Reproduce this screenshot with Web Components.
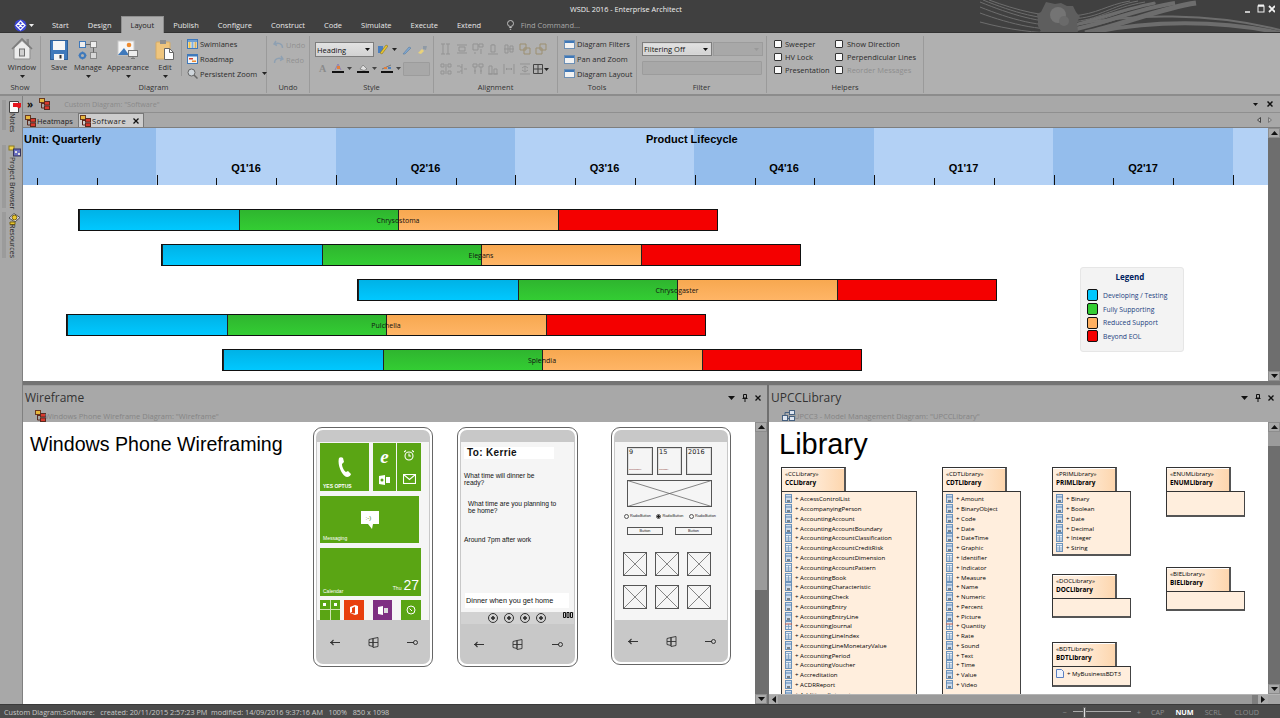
<!DOCTYPE html>
<html lang="en"><head><meta charset="utf-8"><title>WSDL 2016 - Enterprise Architect</title>
<style>html,body{margin:0;padding:0;background:#404040;overflow:hidden}</style></head>
<body>
<ea-app>
  <ea-titlebar slot="top"></ea-titlebar>
  <ea-ribbon slot="top">
    <ea-group label="Show" style="width:41px"><ea-big icon="window" label="Window" arrow style="width:38px;margin-left:3px"></ea-big></ea-group>
    <ea-group label="Diagram" style="width:226px">
      <ea-big icon="save" label="Save" style="width:26px;margin-left:5px"></ea-big>
      <ea-big icon="manage" label="Manage" arrow style="width:28px;margin-left:2px"></ea-big>
      <ea-big icon="appearance" label="Appearance" arrow style="width:44px;margin-left:4px"></ea-big>
      <ea-big icon="edit" label="Edit" arrow style="width:24px;margin-left:3px"></ea-big>
      <ea-vsep style="margin:4px 5px 0 4px"></ea-vsep>
      <ea-stack>
        <ea-small icon="swim">Swimlanes</ea-small>
        <ea-small icon="road">Roadmap</ea-small>
        <ea-small icon="zoom" arrow>Persistent Zoom</ea-small>
      </ea-stack>
    </ea-group>
    <ea-group label="Undo" style="width:43px"><ea-stack style="margin-left:6px">
        <ea-small icon="undo" disabled>Undo</ea-small>
        <ea-small icon="redo" disabled>Redo</ea-small></ea-stack></ea-group>
    <ea-group label="Style" style="width:124px"><ea-style-tools></ea-style-tools></ea-group>
    <ea-group label="Alignment" style="width:124px"><ea-align-tools></ea-align-tools></ea-group>
    <ea-group label="Tools" style="width:79px"><ea-stack style="margin-left:6px">
        <ea-small icon="win">Diagram Filters</ea-small>
        <ea-small icon="win">Pan and Zoom</ea-small>
        <ea-small icon="win">Diagram Layout</ea-small></ea-stack></ea-group>
    <ea-group label="Filter" style="width:130px"><ea-filter-tools></ea-filter-tools></ea-group>
    <ea-group label="Helpers" style="width:157px"><ea-helpers></ea-helpers></ea-group>
  </ea-ribbon>

  <ea-rail slot="rail">
    <ea-rail-item icon="notes" style="height:30px;margin-top:4px">Notes</ea-rail-item>
    <ea-rail-item icon="browser" style="height:63px;margin-top:15px">Project Browser</ea-rail-item>
    <ea-rail-item icon="resources" style="height:46px;margin-top:4px">Resources</ea-rail-item>
  </ea-rail>

  <ea-doc slot="doc">
    <ea-roadmap></ea-roadmap>
    <ea-vscroll slot="scroll"></ea-vscroll>
  </ea-doc>

  <ea-pane slot="left" heading="Wireframe" sub="Windows Phone Wireframe Diagram: &quot;Wireframe&quot;" icon="dia" style="width:744px">
    <ea-wire>
      <ea-phone style="left:290px;top:5px" screen="178"><ea-start-screen></ea-start-screen></ea-phone>
      <ea-phone style="left:434px;top:5px;width:121px" screen="182" cut><ea-sms-screen></ea-sms-screen></ea-phone>
      <ea-phone style="left:588px;top:5px;height:238px" screen="178"><ea-form-screen></ea-form-screen></ea-phone>
    </ea-wire>
    <ea-vscroll thumb="158" style="background:#6e6e6e"></ea-vscroll>
  </ea-pane>

  <ea-pane slot="right" heading="UPCCLibrary" sub="UPCC3 - Model Management Diagram: &quot;UPCCLibrary&quot;" icon="net" sub-x="13" style="flex:1">
    <ea-library>
      <ea-package stereo="CCLibrary" name="CCLibrary" style="left:12px;top:45px;width:136px" bodyh="210" types="AAAABBABBAAAARBABBAAA" items="AccessControlList,AccompanyingPerson,AccountingAccount,AccountingAccountBoundary,AccountingAccountClassification,AccountingAccountCreditRisk,AccountingAccountDimension,AccountingAccountPattern,AccountingBook,AccountingCharacteristic,AccountingCheck,AccountingEntry,AccountingEntryLine,AccountingJournal,AccountingLineIndex,AccountingLineMonetaryValue,AccountingPeriod,AccountingVoucher,Accreditation,ACDRReport,AdditionalInterest"></ea-package>
      <ea-package stereo="CDTLibrary" name="CDTLibrary" style="left:173px;top:45px;width:79px" bodyh="210" types="AAAAAABBBAAAARBABBAA" items="Amount,BinaryObject,Code,Date,DateTime,Graphic,Identifier,Indicator,Measure,Name,Numeric,Percent,Picture,Quantity,Rate,Sound,Text,Time,Value,Video"></ea-package>
      <ea-package stereo="PRIMLibrary" name="PRIMLibrary" style="left:283px;top:45px;width:79px" bodyh="65" types="AAAABB" items="Binary,Boolean,Date,Decimal,Integer,String"></ea-package>
      <ea-package stereo="ENUMLibrary" name="ENUMLibrary" style="left:397px;top:45px;width:79px" bodyh="26"></ea-package>
      <ea-package stereo="DOCLibrary" name="DOCLibrary" style="left:283px;top:152px;width:79px" bodyh="20"></ea-package>
      <ea-package stereo="BIELibrary" name="BIELibrary" style="left:397px;top:145px;width:79px" bodyh="20"></ea-package>
      <ea-package stereo="BDTLibrary" name="BDTLibrary" style="left:283px;top:220px;width:79px" bodyh="21" types="D" items="MyBusinessBDT3"></ea-package>
    </ea-library>
    <ea-vscroll thumb="14"></ea-vscroll>
    <ea-hscroll slot="bottom"></ea-hscroll>
  </ea-pane>

  <ea-status slot="status"></ea-status>
</ea-app>

<script>
const F='"Open Sans","Noto Sans","Liberation Sans",sans-serif';
const A='"Liberation Sans",Arial,sans-serif';
const g='#939393';
const win=(c='#3f78b8')=>`<rect x=".5" y=".5" width="10" height="8" fill="#f2f2f2" stroke="#6d8fb4"/><rect x="1" y="1" width="9" height="2" fill="${c}"/>`;
const ICONS={
 window:[22,24,`<path d="M15.5 3h2.5v6l-2.5-2z" fill="#8b8b8b"/><path d="M3 12 11 4.500 19 12v11H3z" fill="#ececec" stroke="#8d8d8d"/><path d="M1 13 11 3l10 10" fill="none" stroke="#7d7d7d" stroke-width="1.600"/><rect x="8.500" y="13" width="5" height="7" fill="#cfcfcf" stroke="#6f6f6f"/>`],
 save:[18,20,`<rect x=".5" y=".5" width="17" height="19" fill="#3f79bb" stroke="#2f6098"/><rect x="3" y="1" width="12" height="9" fill="#f6f6f6"/><rect x="4" y="14" width="10" height="6" fill="#f4f4f4"/><rect x="9.500" y="15" width="2" height="3.500" fill="#333"/>`],
 manage:[20,20,`<rect x="1.500" y="1.500" width="6" height="6" fill="#eee" stroke="#3f79bb"/><rect x="12.500" y="1.500" width="6" height="6" fill="#eee" stroke="#888"/><path d="M7.500 4.500h5" stroke="#666"/><rect x="12.500" y="12.500" width="6" height="6" fill="#d8d8d8" stroke="#888"/><path d="M15.500 7.500v5" stroke="#666"/><circle cx="4.500" cy="15.500" r="2.600" fill="none" stroke="#3f79bb" stroke-width="2"/><path d="M4.500 11.500v1.500M4.500 18v1.500M.5 15.500H2M7 15.500h1.500" stroke="#3f79bb" stroke-width="1.400"/>`],
 appearance:[22,20,`<rect x="1" y="1" width="16" height="14" fill="#f6f6f6" stroke="#c9c9c9"/><circle cx="12" cy="5" r="2.300" fill="#ee8a2f"/><path d="M1 15 7 8l5 7z" fill="#3f79bb"/><rect x="11.500" y="10.500" width="9" height="6" fill="#ededed" stroke="#777"/><path d="M14 18.500h4M16 16.500v2" stroke="#777"/>`],
 edit:[20,21,`<rect x="1" y="3" width="14" height="17" rx="1" fill="#efc57d" stroke="#d5ab66"/><rect x="5" y="1" width="6" height="4" fill="#8f8f8f"/><path d="M9.500 9.500h5l4 4v7h-9z" fill="#fdfdfd" stroke="#666"/><path d="M14.500 9.500v4h4" fill="none" stroke="#666"/>`],
 swim:[11,10,`<rect x=".5" y=".5" width="10" height="9" fill="#eee" stroke="#3f79bb"/><rect x="1" y="1" width="9" height="2" fill="#6f9fd3"/><rect x="1.500" y="3" width="2" height="6" fill="#f0c040"/><rect x="4.500" y="3" width="2" height="6" fill="#7fb0dd"/><rect x="7.500" y="3" width="2" height="6" fill="#d9b25c"/>`],
 road:[11,10,`<rect x=".5" y=".5" width="10" height="9" fill="#f4f4f4" stroke="#3f79bb"/><rect x="1" y="1" width="9" height="1.500" fill="#3f79bb"/><rect x="2" y="4" width="4" height="1.500" fill="#d8412f"/><rect x="5" y="6.500" width="4" height="1.500" fill="#ee8a2f"/>`],
 zoom:[11,11,`<circle cx="4.500" cy="4.500" r="3.500" fill="#cfd6dc" stroke="#666"/><path d="m7 7 3.500 3.500" stroke="#666" stroke-width="1.500"/>`],
 undo:[11,10,`<path d="M3 1 1 4l3 1.500M1.500 4C5 2.500 9.500 3 9.500 8" fill="none" stroke="#8ea0b2" stroke-width="1.400"/>`],
 redo:[11,10,`<path d="M8 1l2 3-3 1.500M9.500 4C6 2.500 1.500 3 1.500 8" fill="none" stroke="#8ea0b2" stroke-width="1.400"/>`],
 win:[11,9,win()],
 dia:[11,12,`<rect x=".5" y=".5" width="5" height="4" fill="#e6b73c" stroke="#6a3a20"/><rect x="5.500" y="3.500" width="5" height="3.500" fill="#d8382c" stroke="#5a2a20"/><rect x="5.500" y="8" width="5" height="3.500" fill="#d8382c" stroke="#5a2a20"/><path d="M2.500 4.500v5.500h3M2.500 5.500h3" fill="none" stroke="#5a2a20"/>`],
 net:[13,12,`<rect x=".5" y="5.500" width="5" height="5" fill="#dfe6f0" stroke="#45607f"/><rect x="7.500" y=".5" width="5" height="4" fill="#dfe6f0" stroke="#45607f"/><rect x="7.500" y="6.500" width="5" height="4" fill="#dfe6f0" stroke="#45607f"/><path d="M3 5.500V2.500h4.500M5.500 8.500h2" fill="none" stroke="#45607f"/>`],
 notes:[13,14,`<path d="M1.500 1.500h9v11h-9z" fill="#fafafa" stroke="#444"/><path d="M5 3h8v4l-2 1.500L9 7H5z" fill="#e4141c"/>`],
 browser:[13,13,`<rect x="1" y="1" width="5" height="4" fill="#f1d34d" stroke="#8a7a20"/><rect x="5.500" y="4" width="7" height="7" fill="#6b6fc0" stroke="#33355f"/><rect x="7" y="6" width="2" height="2" fill="#ddd"/><rect x="10" y="8" width="2" height="2" fill="#ddd"/>`],
 resources:[14,13,`<path d="M1 6 6 1.500l6 4L7 10z" fill="#d9d9ee" stroke="#555"/><circle cx="6.500" cy="5.500" r="2.400" fill="#e9c62f" stroke="#7a6510"/><path d="M2 10h5v2.500H2z" fill="#e9c62f" stroke="#7a6510"/>`]
};
const ic=(n,x='')=>{const [w,h,s]=ICONS[n];return `<svg width="${w}" height="${h}" viewBox="0 0 ${w} ${h}" style="display:block;flex:none;${x}">${s}</svg>`};
const caret=(c='#222')=>`<svg width="5" height="3" viewBox="0 0 5 3" style="display:block"><path d="M0 0h5L2.500 3z" fill="${c}"/></svg>`;

function def(tag,css,render){
  customElements.define(tag,class extends HTMLElement{
    connectedCallback(){ if(this.shadowRoot) return;
      const r=this.attachShadow({mode:'open'});
      r.innerHTML=`<style>${css}</style>`+(typeof render==='function'?render(this):render);
    }
  });
}

def('ea-app',`:host{display:flex;flex-direction:column;width:1280px;height:718px;overflow:hidden;background:#a8a8a8;font-family:${F}}
 .main{flex:1;display:flex;min-height:0}
 .col{flex:1;display:flex;flex-direction:column;min-width:0}
 .split{flex:1;display:flex;gap:2px;min-height:0;background:#6f6f6f}`,
 `<slot name="top"></slot><div class="main"><slot name="rail"></slot><div class="col"><slot name="doc"></slot><div class="split"><slot name="left"></slot><slot name="right"></slot></div></div></div><slot name="status"></slot>`);

def('ea-titlebar',`:host{display:block;height:33px;position:relative;background:#404040;color:#eee;box-sizing:border-box;overflow:hidden}
 .art{position:absolute;left:980px;top:0}
 .t{position:relative;height:17px;display:flex;align-items:center;font-size:7.300px;padding-left:570px;color:#f0f0f0}
 .ctl{margin-left:auto;display:flex;align-items:center;margin-right:5px}
 .tabs{position:relative;display:flex;height:16px;align-items:stretch;font-size:7.500px;color:#e8e8e8;box-shadow:inset 0 -1px #333}
 .logo{width:42.500px;display:flex;align-items:center;padding-left:14px;box-sizing:border-box;gap:2px}
 .tab{padding:0 9.500px;display:flex;align-items:center;padding-bottom:1px}
 .on{background:#b0b0b0;color:#222;border:1px solid #8f8f8f;border-bottom:0;padding:0 8.500px 1px;margin-top:-1px}
 .find{display:flex;align-items:center;margin-left:16px;gap:7px;color:#a8a8a8;padding-bottom:1px}`,
 `<svg class="art" width="300" height="33" viewBox="0 0 300 33" fill="none" stroke="#6d6d6d">
   <g stroke-width="1"><path d="M0 2C30 14 60 24 90 22S130 8 165 2"/><path d="M3 0C33 12 62 21 92 19S130 6 158 1"/><path d="M9 0C36 10 66 18 92 16S126 5 150 1"/><path d="M0 7C30 19 60 28 92 25S140 10 176 3"/><path d="M0 13C30 24 65 33 100 28S150 12 190 3"/></g>
   <path d="M60 33C95 28 130 12 175 3" stroke-width="3"/><path d="M75 33C115 28 150 10 195 3" stroke-width="4"/><path d="M105 33C140 26 180 8 216 3" stroke-width="5"/>
   <path d="M100 24C150 14 230 12 300 30" stroke-width="2"/><path d="M110 33C170 20 240 20 300 33" stroke-width="4"/><path d="M0 22C30 30 55 33 80 33" stroke-width="1"/>
   <g stroke="none"><path d="M66 2l9 2 6-1 6 3 6 0 3 6 4 5-3 5 1 11H62l-4-7 0-6-1-6 4-2z" fill="#5e5e5e"/><circle cx="78" cy="15" r="8" fill="#747474"/><circle cx="84" cy="21" r="5" fill="#6a6a6a"/></g>
  </svg>
  <div class="t">WSDL 2016 - Enterprise Architect<span class="ctl">
    <svg width="30" height="9" viewBox="0 0 30 9" fill="none" stroke="#f2f2f2"><path d="M0 8h5" stroke-width="1.500"/><rect x="13" y="2" width="6" height="6" stroke-width="1"/><path d="M13 1.500h6" stroke-width="2"/><path d="M24 2l6 6m0-6-6 6" stroke-width="1.800"/></svg></span></div>
  <div class="tabs">
   <div class="logo"><svg width="13" height="13" viewBox="0 0 13 13"><circle cx="6.500" cy="6.500" r="6" fill="#3b44d6"/><path d="M6.500 2 11 6.500 6.500 11 2 6.500zM4.200 4.200l4.600 4.600M8.800 4.200 4.200 8.800" fill="none" stroke="#fff" stroke-width="1.100"/></svg>${caret('#eee')}</div>
   <div class="tab">Start</div><div class="tab">Design</div><div class="tab on">Layout</div><div class="tab">Publish</div><div class="tab">Configure</div><div class="tab">Construct</div><div class="tab">Code</div><div class="tab">Simulate</div><div class="tab">Execute</div><div class="tab">Extend</div>
   <div class="find"><svg width="7" height="10" viewBox="0 0 7 10" fill="none" stroke="#c0c0c0"><circle cx="3.500" cy="3.500" r="3"/><path d="M2.300 7.500h2.400M2.800 9.300h1.400"/></svg>Find Command...</div>
  </div>`);

def('ea-ribbon',`:host{display:flex;height:63px;box-sizing:border-box;padding-top:3px;background:#b0b0b0;border-bottom:2px solid #8c8c8c;color:#2b2b2b;font-size:7.500px}`,`<slot></slot>`);
def('ea-group',`:host{display:flex;flex-direction:column;box-sizing:border-box;height:57px;border-right:1px solid #9a9a9a;flex:none}
 .c{flex:1;display:flex;min-height:0}
 .l{height:12px;line-height:12px;text-align:center;color:#333}`,
 e=>`<div class="c"><slot></slot></div><div class="l">${e.getAttribute('label')}</div>`);
def('ea-big',`:host{display:flex;flex-direction:column;align-items:center;flex:none;white-space:nowrap}
 .i{height:21px;margin-top:3px;display:flex;align-items:flex-end}
 .l{line-height:10px;margin-top:2px}
 .a{margin-top:3px}`,
 e=>`<div class="i">${ic(e.getAttribute('icon'))}</div><div class="l">${e.getAttribute('label')}</div>${e.hasAttribute('arrow')?`<div class="a">${caret()}</div>`:''}`);
def('ea-vsep',`:host{display:block;width:1px;height:36px;background:#989898;flex:none}`,'');
def('ea-stack',`:host{display:flex;flex-direction:column;padding-top:1px;flex:none}`,'<slot></slot>');
def('ea-small',`:host{display:flex;align-items:center;height:15px;gap:2px;white-space:nowrap}
 :host([disabled]){color:#919191}
 .a{margin-left:3px}`,
 e=>`${ic(e.getAttribute('icon'))}<slot></slot>${e.hasAttribute('arrow')?`<span class="a">${caret()}</span>`:''}`);
def('ea-combo',`:host{display:flex;align-items:center;box-sizing:border-box;height:15px;background:linear-gradient(#e2e2e2,#d2d2d2);border:1px solid #7d7d7d;padding:0 3px 0 1px;color:#111;font-size:7.500px;flex:none}
 :host([disabled]){background:#a8a8a8;border-color:#9c9c9c}
 .s{flex:1}`,
 e=>`<span class="s"><slot></slot></span>${caret(e.hasAttribute('disabled')?'#999':'#111')}`);
def('ea-field',`:host{display:block;box-sizing:border-box;background:#a8a8a8;border:1px solid #9c9c9c;border-radius:1px;flex:none}`,'');

def('ea-style-tools',`:host{display:flex;flex-direction:column;padding:6px 0 0 5px;gap:5px}
 .r{display:flex;align-items:center;height:15px}`,
 `<div class="r"><ea-combo style="width:59px">Heading</ea-combo>
   <svg style="margin-left:3px" width="11" height="11" viewBox="0 0 11 11"><path d="M1 2h5v7H1z" fill="#4a7fc0"/><path d="M3 9 9 1l2 1-6 8z" fill="#e9c62f" stroke="#7a6510" stroke-width=".5"/></svg>
   <span style="margin-left:4px">${caret()}</span>
   <svg style="margin-left:5px" width="10" height="11" viewBox="0 0 10 11"><path d="M1 10 7 3l2 1-6 6z" fill="#7fa6cf" stroke="#5a7d9f" stroke-width=".6"/></svg>
   <svg style="margin-left:5px" width="11" height="11" viewBox="0 0 11 11"><path d="M1 9 5 5l2 2-3 3z" fill="#e9d27a"/><path d="M6 2l4 0-1 4-3-1z" fill="#8f9aa5"/></svg></div>
  <div class="r" style="margin-top:-1px">
   <span style="font:bold 10px 'Liberation Serif',serif;color:#8a8a8a;margin-left:4px">A</span>
   <svg style="margin-left:6px" width="12" height="11" viewBox="0 0 12 11"><path d="M3 7 6 1l3 6" fill="none" stroke="#8f7fb0"/><rect x="5" y="3" width="3" height="3" fill="#e27f3c"/><rect y="8" width="12" height="2" fill="#111"/></svg>
   <span style="margin-left:3px">${caret('#444')}</span>
   <svg style="margin-left:5px" width="12" height="11" viewBox="0 0 12 11"><path d="M3 6l3-4 4 4-3 1.500z" fill="#e0e0e0" stroke="#666" stroke-width=".6"/><rect y="8" width="12" height="2" fill="#111"/></svg>
   <span style="margin-left:3px">${caret('#444')}</span>
   <svg style="margin-left:4px" width="12" height="11" viewBox="0 0 12 11"><path d="M1 6l9-4" stroke="#777"/><rect x="3" y="4" width="3" height="2" fill="#e27f3c"/><rect x="7" y="4" width="3" height="2" fill="#4a7fc0"/><rect y="8" width="12" height="2" fill="#111"/></svg>
   <span style="margin-left:3px">${caret('#444')}</span>
   <ea-field style="width:27px;height:14px;margin-left:2px"></ea-field></div>`);

const AL=['M3 1v10M8 1v10M1 1h4M1 11h4M6 1h4M6 11h4','M1 2h10M1 10h10M3 4h6v4H3z','M1 1h5v6H1zM7 1h4v3H7zM3 9v2M9 6v5','M1 11h10M4 2h4v7H4zM6 1v1','M1 6h10M2 2h3v8H2zM7 3h3v6H7z','M1 1h6v6H1zM5 5h6v6H5z','M5 1h6v6H5zM1 5h6v6H1z','M1 1h3v3H1zM1 8h3v3H1zM8 1h3v3H8zM8 8h3v3H8zM6 1v10','M1 3h3M1 9h3M8 6h3M6 1v10M4 4h2M4 8h2','M1 1h4v3H1zM7 1h4v3H7zM3 4v7M9 4v7M2 8h2M8 8h2','M1 11h10M2 3h3v8H2zM7 6h3v5H7z','M1 1v10M11 1v10M3 6h6M3 6l1-1M3 6l1 1M9 6l-1-1M9 6l-1 1','M1 1h10M1 11h10M6 3v6M3 5l3-2 3 2M3 7l3 2 3-2'];
def('ea-align-tools',`:host{display:grid;grid-template-columns:repeat(7,15.830px);grid-auto-rows:16px;row-gap:4px;padding:5px 0 0 4px;justify-items:center;align-items:center;align-content:start}`,
 AL.map((d,i)=>`<svg width="12" height="12" viewBox="0 0 12 12" fill="none" stroke="${i==5||i==6?'#9c8f70':g}"><path d="${d}"/></svg>`).join('')+
 `<span style="display:flex;align-items:center;gap:1px"><svg width="10" height="10" viewBox="0 0 10 10" fill="none" stroke="#444"><path d="M.5.5h9v9h-9zM5 .5v9M.5 5h9"/></svg>${caret()}</span>`);

def('ea-filter-tools',`:host{display:flex;flex-direction:column;padding:6px 0 0 5px;gap:5px}
 .r{display:flex;gap:1px}`,
 `<div class="r"><ea-combo style="width:70px;height:14px;box-shadow:0 0 0 1px #d8d8d8 inset">Filtering Off</ea-combo><ea-combo disabled style="width:50px;height:14px"></ea-combo></div><ea-field style="width:120px;height:14px"></ea-field>`);
def('ea-check',`:host{display:flex;align-items:center;height:13px;gap:3px;white-space:nowrap;color:#2b2b2b}
 :host([disabled]){color:#8e8e8e}
 i{display:block;width:8px;height:8px;box-sizing:border-box;background:#fafafa;border:1px solid #333;border-radius:1px;flex:none}`,`<i></i><slot></slot>`);
def('ea-helpers',`:host{display:grid;grid-template-columns:61px auto;grid-template-rows:repeat(3,13px);padding:1px 0 0 7px;align-content:start;column-gap:0}`,
 `<ea-check>Sweeper</ea-check><ea-check style="gap:4px">Show Direction</ea-check><ea-check>HV Lock</ea-check><ea-check style="gap:4px">Perpendicular Lines</ea-check><ea-check>Presentation</ea-check><ea-check disabled style="gap:4px">Reorder Messages</ea-check>`);

def('ea-rail',`:host{display:flex;flex-direction:column;width:23px;flex:none;box-sizing:border-box;background:#a8a8a8;border-right:1px solid #808080;padding-left:2px}`,'<slot></slot>');
def('ea-rail-item',`:host{display:flex;flex-direction:column;align-items:flex-start;width:20px;background:linear-gradient(#9b9b9b,#9b9b9b) 0 0/4px 100% no-repeat;color:#262626;font-size:7.100px;white-space:nowrap}
 .i{margin-left:6px}
 .t{writing-mode:vertical-rl;line-height:8px;margin-left:7px;margin-top:-1px}`,
 e=>`<div class="i">${ic(e.getAttribute('icon'))}</div><div class="t"><slot></slot></div>`);

def('ea-doc',`:host{display:flex;flex-direction:column;height:289px;flex:none;background:#a8a8a8;color:#333;font-size:7.500px}
 .bar{height:17px;flex:none;box-sizing:border-box;display:flex;align-items:center;border-bottom:1px solid #8f8f8f;padding:0 7px 0 4px}
 .sub{margin-left:14px;color:#8a8a8a;font-size:7.200px}
 .ri{margin-left:auto;display:flex;align-items:center;gap:9px}
 .tabs{height:15px;flex:none;display:flex;align-items:flex-end;box-sizing:border-box;padding-left:1px;background:#a8a8a8;position:relative;border-bottom:1px solid #7e7e7e}
 .tab{display:flex;align-items:center;height:13px;gap:1px;padding:0 1px;color:#222;box-sizing:border-box;width:54px}
 .on{background:#cdcdcd;height:14px;border:1px solid #777;border-bottom:0;width:66px;letter-spacing:.05em;padding-left:1px}
 .x{margin-left:auto;margin-right:3px}
 .nav{margin-left:auto;display:flex;gap:7px;align-self:center;padding-right:8px}
 .body{flex:1;display:flex;min-height:0}
 .foot{height:4px;flex:none;background:#747474}`,
 `<div class="bar"><b style="font-size:10px;line-height:1;color:#111;margin-right:6px">»</b>${ic('dia')}<span class="sub">Custom Diagram: "Software"</span><span class="ri">${caret('#111')}<svg width="6" height="6" viewBox="0 0 6 6" stroke="#111" stroke-width="1.500"><path d="M.5.5l5 5m0-5-5 5"/></svg></span></div>
  <div class="tabs"><div class="tab">${ic('dia')}Heatmaps</div><div class="tab on">${ic('dia')}Software<svg class="x" width="6" height="6" viewBox="0 0 6 6" stroke="#111" stroke-width="1.300"><path d="M.5.5l5 5m0-5-5 5"/></svg></div>
   <span class="nav"><svg width="4" height="6" viewBox="0 0 4 6" fill="#bbb" stroke="#444"><path d="M3.500.5v5L.5 3z"/></svg><svg width="4" height="6" viewBox="0 0 4 6" fill="#bbb" stroke="#777"><path d="M.5.500v5l3-2.500z"/></svg></span></div>
  <div class="body"><slot></slot><slot name="scroll"></slot></div><div class="foot"></div>`);

def('ea-vscroll',`:host{display:flex;flex-direction:column;width:12px;flex:none;background:#6e6e6e}
 .b{height:10px;flex:none;background:#a9a9a9;border:1px solid #8d8d8d;box-sizing:border-box;display:flex;align-items:center;justify-content:center}
 .t{flex:1;min-height:0}
 .h{background:#9b9b9b}`,
 e=>`<div class="b"><svg width="7" height="4" viewBox="0 0 7 4"><path d="M0 4h7L3.500 0z" fill="#111"/></svg></div><div class="h" style="height:${e.getAttribute('thumb')||0}px"></div><div class="t"></div><div class="b"><svg width="7" height="4" viewBox="0 0 7 4"><path d="M0 0h7L3.500 4z" fill="#111"/></svg></div>`);
def('ea-hscroll',`:host{display:flex;height:10px;flex:none;background:#9a9a9a;border-top:1px solid #b4b4b4;box-sizing:border-box;align-items:center}
 .e{width:9px;display:flex;justify-content:center;background:#aaa;height:100%;align-items:center;flex:none}
 .t{flex:1}
 .r{background:#7e7e7e;width:6px;height:100%}
 .c{width:12px;height:100%;background:#a4a4a4}`,
 `<div class="e"><svg width="4" height="7" viewBox="0 0 4 7"><path d="M4 0v7L0 3.500z" fill="#111"/></svg></div><div class="t"></div><div class="r"></div><div class="e" style="width:10px"><svg width="4" height="7" viewBox="0 0 4 7"><path d="M0 0v7L4 3.500z" fill="#111"/></svg></div><div class="c"></div>`);

def('ea-pane',`:host{display:flex;flex-direction:column;min-width:0;background:#a8a8a8;flex:none}
 .h{height:37px;flex:none;box-sizing:border-box;border-top:1px solid #9c9c9c;position:relative;color:#333}
 .t{font-size:12px;line-height:23px;padding-left:2px;height:24px}
 .s{display:flex;align-items:center;height:12px;font-size:7.500px;color:#858585;padding-left:var(--sx,12px)}
 .s svg{margin-right:-1px}
 .ri{position:absolute;right:6px;top:8px;display:flex;align-items:center;gap:7px}
 .b{flex:1;display:flex;min-height:0}`,
 e=>{const sx=e.getAttribute('sub-x')||'12';return `<div class="h"><div class="t">${e.getAttribute('heading')}</div><div class="s" style="--sx:${sx}px">${ic(e.getAttribute('icon'))}${e.getAttribute('sub').replace(/"/g,'&quot;')}</div>
  <span class="ri"><svg width="7" height="4" viewBox="0 0 7 4"><path d="M0 0h7L3.500 4z" fill="#111"/></svg><svg width="6" height="8" viewBox="0 0 6 8" fill="none" stroke="#111"><path d="M1.500.5h3v3.500h-3zM.5 4.500h5M3 4.500V8"/></svg><svg width="6" height="6" viewBox="0 0 6 6" stroke="#111" stroke-width="1.300"><path d="M.5.500l5 5m0-5-5 5"/></svg></span></div>
  <div class="b"><slot></slot></div><slot name="bottom"></slot>`});

/* ---------- roadmap diagram ---------- */
def('ea-bar',`:host{position:absolute;display:flex;height:22px;box-sizing:border-box;border:1px solid #111;width:640px;font:7px ${F};color:#111}
 i{display:block;flex:1;box-sizing:border-box;border-left:1px solid #222}
 i:first-child{border-left:0}
 .a{background:linear-gradient(#00b2e6,#00c8ff)}.b{background:linear-gradient(#2fb52f,#33cd33)}.c{background:linear-gradient(#f7a850,#ffb566)}.d{background:#f40000}
 span{position:absolute;left:0;right:0;top:0;height:100%;display:flex;align-items:center;justify-content:center}`,
 e=>`<i class="a"></i><i class="b"></i><i class="c"></i><i class="d"></i><span>${e.getAttribute('label')}</span>`);
def('ea-legend',`:host{position:absolute;display:block;box-sizing:border-box;width:104px;height:85px;background:#f3f3f3;border:1px solid #e6e6e6;border-radius:3px;font:6.800px ${F};color:#1d3f80;padding-left:6px}
 h4{margin:4px 0 6.500px;padding-right:10px;text-align:center;font:bold 8px ${F};color:#00215e;line-height:10px}
 .r{display:flex;align-items:center;gap:5px;height:13.700px}
 i{display:block;width:11px;height:12px;box-sizing:border-box;border:1px solid #111;border-radius:2px}`,
 `<h4>Legend</h4><div class="r"><i style="background:#00c8ff"></i>Developing / Testing</div><div class="r"><i style="background:#33cd33"></i>Fully Supporting</div><div class="r"><i style="background:#ffb061"></i>Reduced Support</div><div class="r"><i style="background:#f40000"></i>Beyond EOL</div>`);
def('ea-roadmap',`:host{display:block;flex:1;position:relative;background:#fff;overflow:hidden;min-width:0}
 .hd{display:flex;height:57px;position:relative;font:bold 11px ${A};color:#000}
 .c{display:flex;align-items:flex-end;justify-content:center;padding-bottom:10px;box-sizing:border-box;flex:none;line-height:14px}
 .d{background:#94bdec}.l{background:#b3d1f5}
 .u{position:absolute;left:1px;top:5px}.p{position:absolute;left:623px;top:5px}
 .tk{position:absolute;bottom:0;width:1px;height:7px;background:#111}
 .mj{height:10px}`,
 ()=>{const w=[133,180,179,179,180,179,180,35],q=['',"Q1'16","Q2'16","Q3'16","Q4'16","Q1'17","Q2'17",''];
  let t='';for(let k=0;k<21;k++){const x=Math.round(14+59.8*k);t+=`<i class="tk${(k-2)%3==0?' mj':''}" style="left:${x}px"></i>`}
  const rows=[['Chrysostoma',55,81],['Elegans',138,116],['Chrysogaster',334,151],['Pulchella',43,186],['Splendia',199,221]];
  return `<div class="hd">${w.map((x,i)=>`<div class="c ${i%2?'l':'d'}" style="width:${x}px">${q[i]}</div>`).join('')}<span class="u">Unit: Quarterly</span><span class="p">Product Lifecycle</span>${t}</div>`+
  rows.map(r=>`<ea-bar label="${r[0]}" style="left:${r[1]}px;top:${r[2]}px"></ea-bar>`).join('')+`<ea-legend style="left:1057px;top:139px"></ea-legend>`});

/* ---------- wireframes ---------- */
def('ea-wire',`:host{display:block;flex:1;position:relative;background:#fff;overflow:hidden;min-width:0}
 h1{margin:0;position:absolute;left:7px;top:10px;font:400 19.600px/24px ${A};color:#000}`,
 `<h1>Windows Phone Wireframing</h1><slot></slot>`);
const navIcons=`<svg width="11" height="7" viewBox="0 0 11 7" fill="none" stroke="#333"><path d="M1 3.500h10M4.500 1 2 3.500 4.500 6" stroke-width="1.100"/></svg><svg width="11" height="11" viewBox="0 0 11 11" fill="none" stroke="#333" stroke-width=".9"><path d="M1 2.500 5 1.500v8l-4-1zM5 1.500 10 .5v9l-5 1zM1 5.500h9"/></svg><svg width="11" height="7" viewBox="0 0 11 7" fill="none" stroke="#333"><path d="M0 3.500h7" stroke-width="1.100"/><circle cx="8.500" cy="3.500" r="2"/></svg>`;
def('ea-phone',`:host{position:absolute;display:block;box-sizing:border-box;width:120px;height:240px;border:1px solid #666;border-radius:9px;padding:2px;background:#fff;font-family:${A}}
 .i{height:100%;display:flex;flex-direction:column;background:#c8c8c8;border-radius:7px;overflow:hidden}
 .top{height:12px;flex:none}
 .s{background:#f5f5f5;margin:0 1px;flex:none;overflow:hidden;position:relative}
 .n{flex:1;display:flex;align-items:center;justify-content:space-between;padding:0 12.500px}`,
 e=>`<div class="i"><div class="top"></div><div class="s" style="height:${e.getAttribute('screen')}px"><slot></slot></div><div class="n">${navIcons}</div></div>`);

const Wi={
 phone:`<svg width="14" height="20" viewBox="0 0 14 20"><path d="M1 1c1-1 3-1 4 0l1 4-2 2c0 3 2 7 4 8l2-1 3 3c0 1-2 3-4 3C4 19-1 8 1 1z" fill="#fff"/></svg>`,
 ie:`<span style="font:italic bold 19px 'Liberation Serif',serif;color:#fff;line-height:15px;height:15px">e</span>`,
 ol:`<svg width="11" height="10" viewBox="0 0 11 10"><path d="M0 1 6 0v10l-6-1z" fill="#fff"/><rect x="7" y="2" width="4" height="6" fill="#fff"/><circle cx="3" cy="5" r="1.500" fill="#5aa514"/></svg>`,
 clock:`<svg width="10" height="11" viewBox="0 0 10 11" fill="none" stroke="#fff" stroke-width="1.100"><circle cx="5" cy="6" r="4"/><path d="M5 3.500V6h2M0 2l2-1.500M10 2 8 .5"/></svg>`,
 mail:`<svg width="13" height="10" viewBox="0 0 13 10" fill="none" stroke="#fff" stroke-width="1.100"><rect x=".5" y=".5" width="12" height="9"/><path d="m.5.500 6 5 6-5"/></svg>`,
 msg:`<svg width="18" height="18" viewBox="0 0 18 18"><path d="M0 0h18v13h-6l-1 5-4-5H0z" fill="#fff"/></svg>`
};
def('ea-start-screen',`:host{display:flex;flex-direction:column;padding:1px 0 0 3px;color:#fff;font-size:5px}
 .r{display:flex}
 .t{background:#5aa514;position:relative;display:flex;align-items:center;justify-content:center;flex:none}
 .l{position:absolute;left:3px;bottom:2px;line-height:6px;white-space:nowrap}
 .col{display:flex;flex-direction:column;justify-content:space-around;align-items:center}`,
 `<div class="r" style="height:48px">
   <div class="t" style="width:49px">${Wi.phone}<span class="l" style="font-weight:bold">YES OPTUS</span></div>
   <div class="t col" style="width:23px;margin-left:4px">${Wi.ie}${Wi.ol}</div>
   <div class="t col" style="width:24px;margin-left:1px">${Wi.clock}${Wi.mail}</div></div>
  <div class="r" style="height:47px;margin-top:5px"><div class="t" style="width:99px"><span style="position:relative;display:flex;align-items:center;justify-content:center">${Wi.msg}<span style="position:absolute;top:4px;left:5px;font-size:6px;color:#3c7a08;line-height:6px">:-)</span></span><span class="l">Messaging</span></div></div>
  <div class="r" style="height:48px;margin-top:5px"><div class="t" style="width:101px"><span class="l">Calendar</span><span style="position:absolute;right:2px;bottom:1px;display:flex;align-items:baseline;gap:2px;line-height:14px">Thu<span style="font-size:14px">27</span></span></div></div>
  <div class="r" style="height:20px;margin-top:4px">
   <div class="t" style="width:20px;background:linear-gradient(#cfe3b5,#cfe3b5) center/1px 100% no-repeat,linear-gradient(#cfe3b5,#cfe3b5) 0 9px/100% 1px no-repeat,linear-gradient(#fff,#fff) 3px 3px/3px 3px no-repeat,linear-gradient(#fff,#fff) 14px 3px/3px 3px no-repeat,#5aa514"></div>
   <div class="t" style="width:20px;margin-left:4px;background:#e8400f"><svg width="8" height="10" viewBox="0 0 8 10"><path d="M0 2 5 0l3 1v8L5 10 0 8l5 .5V1.500L2 3v4L0 8z" fill="#fff"/></svg></div>
   <div class="t" style="width:19px;margin-left:9px;background:#7e2f82"><svg width="10" height="9" viewBox="0 0 10 9"><path d="M0 1 5 0v9L0 8z" fill="#fff"/><rect x="6" y="2" width="4" height="5" fill="#ddd"/></svg></div>
   <div class="t" style="width:20px;margin-left:9px"><svg width="10" height="10" viewBox="0 0 10 10" fill="none" stroke="#fff"><circle cx="5" cy="5" r="4"/><path d="M3.500 3.500 6 6"/></svg></div></div>`);
def('ea-sms-screen',`:host{display:block;height:100%;position:relative;font-size:6.650px;line-height:7px;color:#111;padding-top:5px;box-sizing:border-box}
 .to{margin:0 20px 0 3px;height:12px;background:#fff;font:bold 10px/12px ${A};padding-left:3px;letter-spacing:.35px;color:#111}
 p{margin:0;position:absolute;white-space:pre}
 .in{position:absolute;left:4px;top:151px;width:104px;height:15px;background:#fff;font-size:7.300px;line-height:15px;padding-left:1px;box-sizing:border-box}
 .bar{position:absolute;left:0;right:0;bottom:0;height:12px;background:#d2d2d2;display:flex;align-items:center;gap:6px;padding-left:27px;box-sizing:border-box}
 .bar i{display:block;width:10px;height:10px;border:1px solid #333;border-radius:50%;box-sizing:border-box;background:radial-gradient(#333 0 1.500px,transparent 2px);flex:none}
 .m{position:absolute;right:1px;top:0;display:block}`,
 `<div class="to">To: Kerrie</div><p style="left:3px;top:30px">What time will dinner be
ready?</p><p style="left:7px;top:58px">What time are you planning to
be home?</p><p style="left:3px;top:94px">Around 7pm after work</p><div class="in">Dinner when you get home</div><div class="bar"><i></i><i></i><i></i><i></i><svg class="m" width="10" height="6" viewBox="0 0 10 6" fill="none" stroke="#111"><path d="M.5.500h2v5h-2zM4 .5h2v5H4zM7.500.5h2v5h-2z"/></svg></div>`);
const xbox=(w,h,x='')=>`<svg width="${w}" height="${h}" viewBox="0 0 ${w} ${h}" style="display:block;${x}" fill="#f5f5f5" stroke="#555"><rect x=".5" y=".5" width="${w-1}" height="${h-1}"/><path d="M.5 .5L${w-.5} ${h-.5}M${w-.5} .5L.5 ${h-.5}" stroke-width=".7"/></svg>`;
def('ea-form-screen',`:host{display:flex;flex-direction:column;height:100%;padding:5px 0 0 12px;box-sizing:border-box;font-family:${A};color:#222}
 .dates{display:flex}
 .d{box-sizing:border-box;height:28px;border:1px solid #555;box-shadow:inset 0 0 0 1px #ddd;font:6.500px/8px "DejaVu Sans",sans-serif;padding-left:1px;background:#f5f5f5;position:relative}
 .d small{position:absolute;left:1px;bottom:3px;font:2.500px/3px ${A};color:#833}
 .rad{display:flex;align-items:center;height:8px;margin-top:5px;margin-left:-3.500px;font-size:3.800px;white-space:nowrap}
 .rad i{display:block;width:5px;height:5px;border:1px solid #555;border-radius:50%;box-sizing:border-box;background:#f5f5f5;margin-right:1.500px;flex:none}
 .rad span{display:flex;align-items:center;width:32.500px;flex:none}
 .btns{display:flex;margin-top:7px;gap:12px}
 .b{width:36px;height:8px;box-sizing:border-box;border:1px solid #555;font-size:3.800px;line-height:6px;text-align:center;background:#f5f5f5}
 .grid{display:grid;grid-template-columns:repeat(3,24px);grid-auto-rows:24px;column-gap:8px;row-gap:9px;margin:17px 0 0 -4px}`,
 `<div class="dates"><div class="d" style="width:26px">9<small>September</small></div><div class="d" style="width:25px;margin-left:4px">15<small>Tuesday</small></div><div class="d" style="width:26px;margin-left:4px">2016</div></div>
  ${xbox(85,27,'margin-top:5px')}
  <div class="rad"><span><i></i>RadioButton</span><span><i style="background:radial-gradient(#222 0 1.200px,#f5f5f5 1.500px)"></i>RadioButton</span><span><i></i>RadioButton</span></div>
  <div class="btns"><div class="b">Button</div><div class="b" style="width:37px">Button</div></div>
  <div class="grid">${Array(6).fill(xbox(24,24)).join('')}</div>`);

/* ---------- library ---------- */
def('ea-library',`:host{display:block;flex:1;position:relative;background:#fff;overflow:hidden;min-width:0}
 h1{margin:0;position:absolute;left:10px;top:4px;font:400 29px/36px ${A};color:#000}`,
 `<h1>Library</h1><slot></slot>`);
const rowIcon=t=>{
 if(t==='D')return `<svg width="8" height="9" viewBox="0 0 8 9"><path d="M.5.5h5l2 2v6h-7z" fill="#eef2fb" stroke="#5a7fc0"/></svg>`;
 if(t==='B')return `<svg width="7" height="9" viewBox="0 0 7 9"><rect x=".5" y=".5" width="6" height="8" fill="#e8eef5" stroke="#6d93bb"/><path d="M0 2.500h7M0 5h7M0 7h7M3.500 2.500v6" stroke="#6d93bb" stroke-width=".7"/></svg>`;
 if(t==='R')return `<svg width="7" height="9" viewBox="0 0 7 9"><rect x=".5" y=".5" width="6" height="8" fill="#dfe6ee" stroke="#6d93bb"/><path d="M0 3h7" stroke="#c45d4a"/><path d="M0 5.500h7M3.500 3v6" stroke="#6d93bb" stroke-width=".7"/></svg>`;
 return `<svg width="7" height="9" viewBox="0 0 7 9"><rect x=".5" y=".5" width="6" height="8" fill="#cfdcec" stroke="#6d93bb"/><path d="M0 3h7" stroke="#5d86b5"/><path d="M2 7h3" stroke="#222"/></svg>`;
};
def('ea-package',`:host{position:absolute;display:block;font:6.100px "Open Sans","Noto Sans",sans-serif;color:#000}
 .tab{box-sizing:border-box;width:65px;height:24px;border:1px solid #333;border-bottom:0;border-right:2px solid #555;background:linear-gradient(90deg,#ffeedd 40%,#fdd6ae);padding:1px 0 0 3px;line-height:9px;white-space:nowrap;box-shadow:inset 0 1px 0 #fff}
 .tab b{display:block;font-weight:700;color:#000;font-size:6.400px}
 .body{box-sizing:border-box;background:#ffeedd;border:1px solid #333;border-right:1.500px solid #444;border-bottom:2px solid #555;overflow:hidden;padding-top:2px}
 .r{display:flex;align-items:center;height:9.770px;white-space:nowrap;padding-left:3px;gap:3px;color:#000}
 .r svg{flex:none}`,
 e=>{const items=(e.getAttribute('items')||'').split(',').filter(Boolean),types=e.getAttribute('types')||'';
  return `<div class="tab">«${e.getAttribute('stereo')}»<b>${e.getAttribute('name')}</b></div><div class="body" style="height:${e.getAttribute('bodyh')}px">${items.map((n,i)=>`<div class="r">${rowIcon(types[i])}<span>+ ${n}</span></div>`).join('')}</div>`});

def('ea-status',`:host{display:flex;align-items:center;height:14px;flex:none;box-sizing:border-box;background:#4b4b4b;border-top:1px solid #3a3a3a;color:#c9c9c9;font-size:7.250px;padding-left:4px;white-space:nowrap}
 .r{margin-left:auto;display:flex;align-items:center;color:#8e8e8e}
 .sl{width:58px;height:1px;background:#aaa;position:relative;margin:0 6px}
 .sl i{position:absolute;left:10px;top:-4px;height:9px;background:#ddd;border:1px solid #666;display:block;width:1px}
 .on{color:#fff;font-weight:700}`,
 `<span style="white-space:pre">Custom Diagram:Software:   created: 20/11/2015 2:57:23 PM  modified: 14/09/2016 9:37:16 AM   100%   850 x 1098</span>
  <span class="r"><span>−</span><span class="sl"><i></i></span><span>+</span><span style="margin-left:10px">CAP</span><span class="on" style="margin-left:11px">NUM</span><span style="margin-left:11px">SCRL</span><span style="margin-left:13px;margin-right:21px">CLOUD</span></span>`);
</script>
</body></html>
